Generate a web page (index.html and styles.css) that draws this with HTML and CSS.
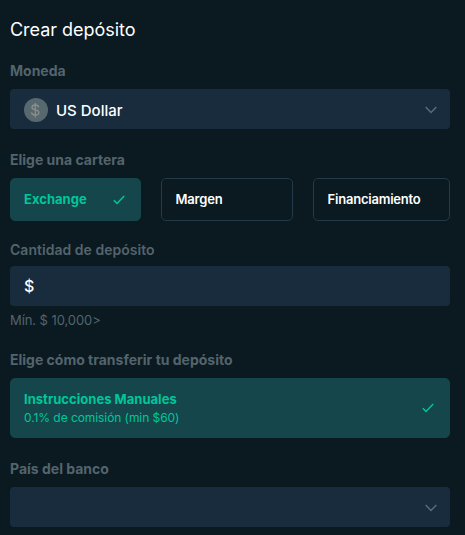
FILE: index.html
```html
<!DOCTYPE html>
<html lang="es">
<head>
<meta charset="utf-8">
<title>Crear depósito</title>
<link rel="stylesheet" href="styles.css">
</head>
<body>
<main class="deposit">
  <h1 class="title">Crear depósito</h1>

  <section class="field currency">
    <h2 class="label">Moneda</h2>
    <div class="control">
      <svg class="coin" width="24" height="24" viewBox="0 0 24 24" fill="none"><circle cx="12" cy="12" r="12" fill="#58686f"/><path d="M14.6 9.3C14.4 7.7 13 7 11.2 7S8 7.9 8 9.4c0 3.4 6.9 1.6 6.9 5.1 0 1.6-1.5 2.5-3.6 2.5s-3.6-1-3.8-2.7M11.3 5v14.5" stroke="#8c8e8e" stroke-width="1.3"/></svg>
      <span class="value name">US Dollar</span>
      <svg class="chevron" width="12" height="8" viewBox="0 0 12 8" fill="none"><path d="M.7.9 6 6.5 11.3.9" stroke="#5b6b76" stroke-width="1.5"/></svg>
    </div>
  </section>

  <section class="field wallet">
    <h2 class="label">Elige una cartera</h2>
    <div class="cards">
      <div class="card selected"><span class="bold">Exchange</span><svg class="check" width="12" height="10" viewBox="0 0 12 10" fill="none"><path d="M.8 5.3 4 8.4 11.2 1" stroke="#01c699" stroke-width="1.5"/></svg></div>
      <div class="card"><span class="option">Margen</span></div>
      <div class="card"><span class="option">Financiamiento</span></div>
    </div>
  </section>

  <section class="field amount">
    <h2 class="label medium">Cantidad de depósito</h2>
    <div class="control">
      <span class="value symbol">$</span>
    </div>
    <p class="hint">Mín. $ 10,000&gt;</p>
  </section>

  <section class="field method">
    <h2 class="label">Elige cómo transferir tu depósito</h2>
    <div class="card selected tall">
      <div>
        <div class="bold">Instrucciones Manuales</div>
        <div class="fee">0.1% de comisión (min $60)</div>
      </div>
      <svg class="check" width="12" height="10" viewBox="0 0 12 10" fill="none"><path d="M.8 5.3 4 8.4 11.2 1" stroke="#01c699" stroke-width="1.5"/></svg>
    </div>
  </section>

  <section class="field country">
    <h2 class="label">País del banco</h2>
    <div class="control">
      <svg class="chevron" width="12" height="8" viewBox="0 0 12 8" fill="none"><path d="M.7.9 6 6.5 11.3.9" stroke="#5b6b76" stroke-width="1.5"/></svg>
    </div>
  </section>
</main>
</body>
</html>
```
FILE: styles.css
```css
* { box-sizing: border-box; }
body {
  margin: 0;
  background: #0b1921;
  color: #fff;
  font-family: Inter, "Liberation Sans", sans-serif;
}
.deposit { padding: 18px 15px 8px 10px; }
.title { margin: 0; font-size: 18px; line-height: 24px; font-weight: 400; letter-spacing: -0.03px; }
.label {
  margin: 0;
  height: 18px;
  font-size: 14px;
  line-height: 18px;
  font-weight: 700;
  color: #53646c;
}
.label.medium { font-weight: 600; letter-spacing: 0.03px; }
.currency { margin-top: 20px; }
.currency .control { margin-top: 9px; }
.wallet { margin-top: 22px; }
.cards {
  margin-top: 9px;
  display: grid;
  grid-template-columns: 131px 132px 137px;
  gap: 20px;
}
.amount { margin-top: 20px; }
.amount .control { margin-top: 7px; }
.method { margin-top: 22px; }
.country { margin-top: 22px; }
.country .control { margin-top: 9px; }
.control {
  display: flex;
  align-items: center;
  height: 40px;
  padding: 2px 13px 0 14px;
  border-radius: 4px;
  background: #182c3d;
}
.value { margin-left: 8px; font-size: 15px; line-height: 20px; font-weight: 500; }
.name { padding-top: 2px; }
.symbol { margin-left: 0; font-size: 16px; line-height: 22px; padding-bottom: 2px; }
.coin { display: block; }
.chevron { margin-left: auto; }
.card {
  display: flex;
  align-items: center;
  justify-content: space-between;
  height: 43px;
  padding: 0 15px 0 13px;
  border: 1px solid #243a49;
  border-radius: 5px;
  font-size: 13px;
}
.option { padding-bottom: 2px; padding-left: 0.6px; font-weight: 600; letter-spacing: -0.22px; }
.selected {
  border-color: #14464c;
  background: #14464c;
  color: #01c699;
}
.bold { padding-bottom: 2px; font-weight: 700; letter-spacing: 0.03px; }
.tall { height: 60px; margin-top: 9px; }
.tall .bold { padding-bottom: 0; line-height: 18px; }
.fee { padding-top: 1px; font-size: 12px; line-height: 18px; font-weight: 400; letter-spacing: -0.07px; }
.hint { margin: 5px 0 0; font-size: 13px; line-height: 18px; color: #53646c; letter-spacing: -0.07px; }
```
